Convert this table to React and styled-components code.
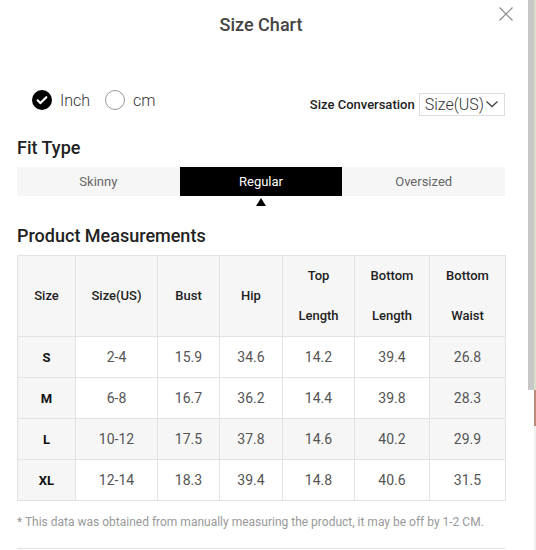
import { useState } from 'react'
import styled, { createGlobalStyle } from 'styled-components'

const GlobalStyle = createGlobalStyle`
  html, body {
    margin: 0;
    padding: 0;
    background: #fff;
  }
  body {
    font-family: Roboto, "Liberation Sans", Arial, sans-serif;
    overflow: hidden;
  }
`

const Page = styled.div`
  width: 536px;
  height: 550px;
  display: flex;
  overflow: hidden;
`

const Modal = styled.div`
  position: relative;
  width: 528px;
  flex-shrink: 0;
  box-sizing: border-box;
  padding: 0 23px 0 17px;
  background: #fff;
`

const Title = styled.h2`
  margin: 0;
  padding-top: 13px;
  font-size: 18px;
  line-height: 24px;
  font-weight: 500;
  color: #444;
  text-align: center;
`

const CloseButton = styled.button`
  position: absolute;
  top: 6px;
  right: 14px;
  width: 16px;
  height: 16px;
  padding: 0;
  border: none;
  background: none;
  cursor: pointer;
`

const OptionsRow = styled.div`
  margin-top: 55px;
  height: 24px;
  display: flex;
  align-items: center;
  justify-content: space-between;
`

const UnitGroup = styled.div`
  display: flex;
  align-items: center;
  gap: 15px;
  padding-left: 15px;
  margin-bottom: 8px;
`

const Unit = styled.label`
  display: flex;
  align-items: center;
  gap: 8px;
  font-size: 16px;
  font-weight: 300;
  color: #333;
  cursor: pointer;
`

const EmptyCircle = styled.span`
  width: 18px;
  height: 18px;
  border: 1px solid #999;
  border-radius: 50%;
`

const Conversion = styled.div`
  display: flex;
  align-items: center;
  gap: 4px;
`

const ConversionLabel = styled.span`
  font-size: 13px;
  font-weight: 500;
  color: #222;
`

const Select = styled.div`
  height: 21px;
  display: flex;
  align-items: center;
  gap: 1px;
  padding: 0 5px;
  border: 1px solid #ddd;
  font-size: 16px;
  font-weight: 300;
  color: #333;
`

const SectionTitle = styled.h3`
  margin: ${p => p.$top}px 0 8px;
  font-size: 18px;
  line-height: 22px;
  font-weight: 500;
  color: #222;
`

const Tabs = styled.div`
  display: grid;
  grid-template-columns: 1fr 1fr 1fr;
  height: 29px;
  background: #f6f6f6;
`

const Tab = styled.div`
  position: relative;
  display: flex;
  align-items: center;
  justify-content: center;
  font-size: 13px;
  color: ${p => (p.$active ? '#fff' : '#666')};
  background: ${p => (p.$active ? '#000' : 'transparent')};
  cursor: pointer;

  &::after {
    content: '';
    display: ${p => (p.$active ? 'block' : 'none')};
    position: absolute;
    top: calc(100% + 2px);
    left: 50%;
    margin-left: -5px;
    border-left: 5px solid transparent;
    border-right: 5px solid transparent;
    border-bottom: 8px solid #000;
  }
`

const Table = styled.table`
  width: 488px;
  border-collapse: collapse;
  table-layout: fixed;
`

const HeadCell = styled.th`
  border: 1px solid #e3e3e3;
  background: #f6f6f6;
  height: 80px;
  padding: 0;
  font-size: 13px;
  line-height: 40px;
  font-weight: 500;
  color: #222;
  text-align: center;
`

const Cell = styled.td`
  border: 1px solid #e3e3e3;
  height: 40px;
  padding: 0;
  text-align: center;
  font-size: ${p => (p.$label ? '13px' : '14px')};
  font-weight: ${p => (p.$label ? 700 : 400)};
  color: ${p => (p.$label ? '#111' : '#555')};
  background: ${p => (p.$shaded ? '#f6f6f6' : '#fff')};
`

const Note = styled.p`
  margin: 13px 0 0;
  font-size: 12px;
  line-height: 16px;
  color: #999;
`

const Divider = styled.div`
  margin-top: 18px;
  border-top: 1px solid #e3e3e3;
`

const Edge = styled.div`
  flex: 1;
  display: flex;
  flex-direction: column;
  background: #fff;
`

const ScrollThumb = styled.div`
  height: 390px;
  width: 6px;
  background: #c8c8c8;
  border-right: 2px solid #d8e0cc;
`

const EdgeBelow = styled.div`
  flex: 1;
  background: linear-gradient(#b98a78 0 36px, #f0f0f0 36px);
  border-left: 6px solid #fff;
`

const columns = [
  { key: 'size', label: ['Size'], width: 58 },
  { key: 'us', label: ['Size(US)'], width: 82 },
  { key: 'bust', label: ['Bust'], width: 62 },
  { key: 'hip', label: ['Hip'], width: 63 },
  { key: 'top', label: ['Top', 'Length'], width: 72 },
  { key: 'bl', label: ['Bottom', 'Length'], width: 75 },
  { key: 'bw', label: ['Bottom', 'Waist'], width: 76 },
]

const rows = [
  ['S', '2-4', '15.9', '34.6', '14.2', '39.4', '26.8'],
  ['M', '6-8', '16.7', '36.2', '14.4', '39.8', '28.3'],
  ['L', '10-12', '17.5', '37.8', '14.6', '40.2', '29.9'],
  ['XL', '12-14', '18.3', '39.4', '14.8', '40.6', '31.5'],
]

const fitTypes = ['Skinny', 'Regular', 'Oversized']

const CheckIcon = () => (
  <svg width="20" height="20" viewBox="0 0 20 20">
    <circle cx="10" cy="10" r="10" fill="#000" />
    <path d="M5.6 10.3l2.9 2.8 5.8-5.9" fill="none" stroke="#fff" strokeWidth="2.2" strokeLinecap="round" strokeLinejoin="round" />
  </svg>
)

const App = () => {
  const [unit, setUnit] = useState('inch')
  const [fit, setFit] = useState('Regular')

  return (
    <Page>
      <GlobalStyle />
      <Modal>
        <Title>Size Chart</Title>
        <CloseButton aria-label="close">
          <svg width="16" height="16" viewBox="0 0 16 16">
            <path d="M1.5 1.5l13 13M14.5 1.5l-13 13" stroke="#888" strokeWidth="1.2" />
          </svg>
        </CloseButton>

        <OptionsRow>
          <UnitGroup>
            <Unit onClick={() => setUnit('inch')}>
              {unit === 'inch' ? <CheckIcon /> : <EmptyCircle />}
              Inch
            </Unit>
            <Unit onClick={() => setUnit('cm')}>
              {unit === 'cm' ? <CheckIcon /> : <EmptyCircle />}
              cm
            </Unit>
          </UnitGroup>
          <Conversion>
            <ConversionLabel>Size Conversation</ConversionLabel>
            <Select>
              Size(US)
              <svg width="14" height="10" viewBox="0 0 14 10">
                <path d="M1.5 2.5l5.5 5 5.5-5" fill="none" stroke="#444" strokeWidth="1.3" />
              </svg>
            </Select>
          </Conversion>
        </OptionsRow>

        <SectionTitle $top={21}>Fit Type</SectionTitle>
        <Tabs>
          {fitTypes.map(t => (
            <Tab key={t} $active={fit === t} onClick={() => setFit(t)}>
              {t}
            </Tab>
          ))}
        </Tabs>

        <SectionTitle $top={29}>Product Measurements</SectionTitle>
        <Table>
          <colgroup>
            {columns.map(c => (
              <col key={c.key} style={{ width: c.width }} />
            ))}
          </colgroup>
          <thead>
            <tr>
              {columns.map(c => (
                <HeadCell key={c.key}>
                  {c.label.map(line => (
                    <div key={line}>{line}</div>
                  ))}
                </HeadCell>
              ))}
            </tr>
          </thead>
          <tbody>
            {rows.map((row, r) => (
              <tr key={row[0]}>
                {row.map((value, i) => (
                  <Cell
                    key={i}
                    $label={i === 0}
                    $shaded={i === 0 || r === 2 || (i === 6 && r < 3)}
                  >
                    {value}
                  </Cell>
                ))}
              </tr>
            ))}
          </tbody>
        </Table>
        <Note>* This data was obtained from manually measuring the product, it may be off by 1-2 CM.</Note>
        <Divider />
      </Modal>
      <Edge>
        <ScrollThumb />
        <EdgeBelow />
      </Edge>
    </Page>
  )
}

export default App
